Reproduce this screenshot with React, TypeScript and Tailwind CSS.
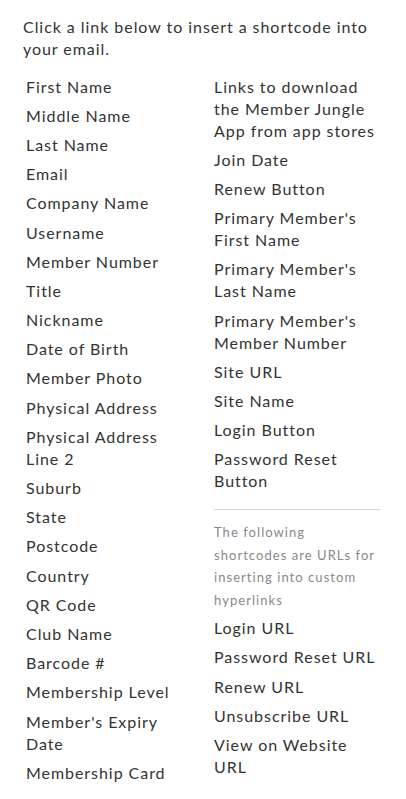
const leftItems: string[] = [
  "First Name",
  "Middle Name",
  "Last Name",
  "Email",
  "Company Name",
  "Username",
  "Member Number",
  "Title",
  "Nickname",
  "Date of Birth",
  "Member Photo",
  "Physical Address",
  "Physical Address Line 2",
  "Suburb",
  "State",
  "Postcode",
  "Country",
  "QR Code",
  "Club Name",
  "Barcode #",
  "Membership Level",
  "Member's Expiry Date",
  "Membership Card",
];

const rightItems: string[] = [
  "Links to download the Member Jungle App from app stores",
  "Join Date",
  "Renew Button",
  "Primary Member's First Name",
  "Primary Member's Last Name",
  "Primary Member's Member Number",
  "Site URL",
  "Site Name",
  "Login Button",
  "Password Reset Button",
];

const urlItems: string[] = [
  "Login URL",
  "Password Reset URL",
  "Renew URL",
  "Unsubscribe URL",
  "View on Website URL",
];

const ShortcodeLink = ({ label }: { label: string }) => (
  <a className="block cursor-pointer py-[3.6px] text-[16px] leading-[22px] text-[#333]">
    {label}
  </a>
);

export default function App() {
  return (
    <div className="min-h-[799px] w-[406px] bg-white font-['Lato','Liberation_Sans',sans-serif] tracking-[0.95px] text-[#333]">
      <div className="px-[23px] pt-[16px]">
        <p className="text-[16px] leading-[22px]">
          Click a link below to insert a shortcode into your email.
        </p>

        <div className="mt-[12px] grid grid-cols-[163px_166px] gap-x-[28px]">
          {/* left column */}
          <div className="pl-[3px]">
            {leftItems.map((item, i) => (
              <ShortcodeLink key={i} label={item} />
            ))}
          </div>

          {/* right column */}
          <div>
            {rightItems.map((item, i) => (
              <ShortcodeLink key={i} label={item} />
            ))}
            <hr className="mt-[13px] border-t border-[#d4d4d4]" />
            <p className="mt-[11px] mb-[2px] text-[13px] leading-[22.7px] tracking-[1.05px] text-[#888]">
              The following shortcodes are URLs for inserting into custom hyperlinks
            </p>
            {urlItems.map((item, i) => (
              <ShortcodeLink key={i} label={item} />
            ))}
          </div>
        </div>
      </div>
    </div>
  );
}
